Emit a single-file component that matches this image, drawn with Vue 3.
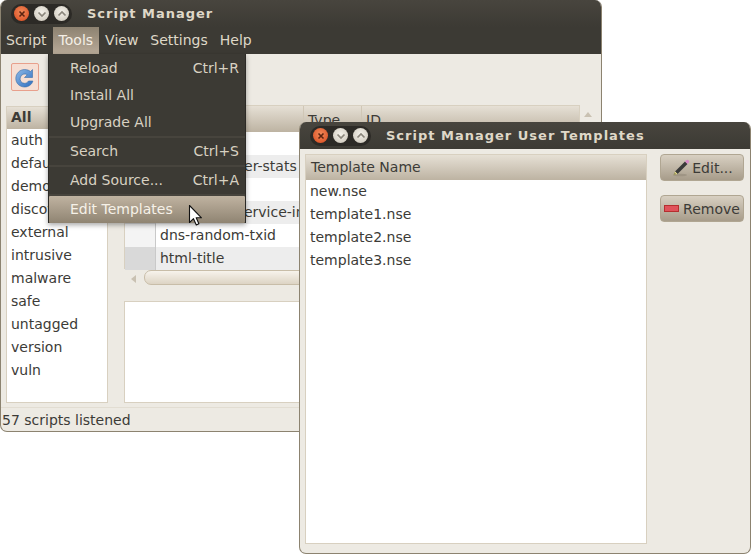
<template>
  <div class="desk">
    <div class="win main-win">
      <div class="titlebar">
        <div class="wm-btns">
          <span class="wm close"><svg width="10" height="10" viewBox="0 0 10 10"><path d="M2.5 2.5l5 5M7.5 2.5l-5 5" stroke="#5c2410" stroke-width="1.6" fill="none"/></svg></span>
          <span class="wm"><svg width="10" height="10" viewBox="0 0 10 10"><path d="M1.5 3.5L5 7l3.5-3.5" stroke="#8a857b" stroke-width="1.7" fill="none"/></svg></span>
          <span class="wm"><svg width="10" height="10" viewBox="0 0 10 10"><path d="M1.5 6.5L5 3l3.5 3.5" stroke="#8a857b" stroke-width="1.7" fill="none"/></svg></span>
        </div>
        <span class="title">Script Manager</span>
      </div>
      <div class="menubar">
        <span v-for="m in menus" :key="m" class="menu-top" :class="{ open: m === 'Tools' }">{{ m }}</span>
      </div>
      <div class="toolbar">
        <span class="tool-btn">
          <svg width="22" height="22" viewBox="0 0 22 22">
            <defs>
              <linearGradient id="reload" x1="0" y1="0" x2="1" y2="1">
                <stop offset="0" stop-color="#8db8e6"/>
                <stop offset="1" stop-color="#2f6fc0"/>
              </linearGradient>
            </defs>
            <path d="M18.5 3.5v8h-8l2.8-2.8a4.6 4.6 0 0 0-6.8 2.3 4.4 4.4 0 0 0 4 6.3c1.8 0 3.3-.9 4-2.3h4.4c-1 3.600-4.300 6-8.300 6-5 0-8.800-3.800-8.800-8.500S5.600 3.500 10.600 3.500c2.500 0 4.600.9 5.900 2z" fill="url(#reload)" stroke="#3b6ea8" stroke-width=".6"/>
          </svg>
        </span>
      </div>
      <div class="panes">
        <div class="cat-list">
          <div class="cat-head">All</div>
          <div v-for="c in categories" :key="c" class="cat-row">{{ c }}</div>
        </div>
        <div class="right-col">
          <div class="tree">
            <div class="tree-head">
              <span class="th th-name"></span>
              <span class="th th-type">Type</span>
              <span class="th th-id">ID</span>
            </div>
            <div v-for="(s, i) in scripts" :key="i" class="tree-row" :class="{ odd: i % 2 === 1 }">
              <span class="grip"></span>
              <span class="script-name">{{ s }}</span>
            </div>
          </div>
          <div class="hscroll">
            <span class="arrow-left"></span>
            <span class="thumb"></span>
          </div>
          <div class="details"></div>
        </div>
        <div class="vscroll"><span class="arrow-up"></span></div>
      </div>
      <div class="statusbar">57 scripts listened</div>
    </div>

    <div class="menu">
      <template v-for="item in toolItems" :key="item.label">
        <div v-if="item.sep" class="menu-sep"></div>
        <div class="menu-item" :class="{ active: item.active }">
          <span>{{ item.label }}</span>
          <span class="accel">{{ item.accel }}</span>
        </div>
      </template>
    </div>

    <div class="win tpl-win">
      <div class="titlebar">
        <div class="wm-btns">
          <span class="wm close"><svg width="10" height="10" viewBox="0 0 10 10"><path d="M2.5 2.5l5 5M7.5 2.5l-5 5" stroke="#5c2410" stroke-width="1.6" fill="none"/></svg></span>
          <span class="wm"><svg width="10" height="10" viewBox="0 0 10 10"><path d="M1.5 3.5L5 7l3.5-3.500" stroke="#8a857b" stroke-width="1.7" fill="none"/></svg></span>
          <span class="wm"><svg width="10" height="10" viewBox="0 0 10 10"><path d="M1.5 6.5L5 3l3.5 3.500" stroke="#8a857b" stroke-width="1.7" fill="none"/></svg></span>
        </div>
        <span class="title">Script Manager User Templates</span>
      </div>
      <div class="tpl-body">
        <div class="tpl-list">
          <div class="tpl-head">Template Name</div>
          <div v-for="t in templates" :key="t" class="tpl-row">{{ t }}</div>
        </div>
        <div class="tpl-actions">
          <button class="btn">
            <svg width="20" height="20" viewBox="0 0 20 20">
              <ellipse cx="9" cy="17" rx="7" ry="1.300" fill="#8d8474" opacity=".5"/>
              <path d="M4 13.500L14 3.500l2.500 2.500-10 10z" fill="#3a3a3a"/>
              <path d="M14 3.500l1.200-1.200a1.500 1.500 0 0 1 2.200 0l.3.300a1.500 1.500 0 0 1 0 2.200L16.500 6z" fill="#d98ac8"/>
              <path d="M4 13.500l2.500 2.500-4 1.300z" fill="#f2e88a"/>
              <path d="M2.500 17.300l1-3 2 2z" fill="#2b2b2b" opacity=".45"/>
            </svg>
            <span>Edit...</span>
          </button>
          <button class="btn btn-remove">
            <span class="minus"></span>
            <span>Remove</span>
          </button>
        </div>
      </div>
    </div>

    <svg class="cursor" width="16" height="24" viewBox="0 0 16 24">
      <path d="M1.500 1.500v17l4-3.800 2.800 6.300 2.600-1.200-2.700-6h5.300z" fill="#fff" stroke="#111" stroke-width="1.100" stroke-linejoin="round"/>
    </svg>
  </div>
</template>

<script setup>
const menus = ['Script', 'Tools', 'View', 'Settings', 'Help']
const categories = ['auth', 'default', 'demo', 'discovery', 'external', 'intrusive', 'malware', 'safe', 'untagged', 'version', 'vuln']
const scripts = ['citrix-brute', 'dhcp-discover-stats', 'dns-zone', 'dns-cache-service-info', 'dns-random-txid', 'html-title']
const toolItems = [
  { label: 'Reload', accel: 'Ctrl+R' },
  { label: 'Install All' },
  { label: 'Upgrade All' },
  { label: 'Search', accel: 'Ctrl+S', sep: true },
  { label: 'Add Source...', accel: 'Ctrl+A', sep: true },
  { label: 'Edit Templates', sep: true, active: true },
]
const templates = ['new.nse', 'template1.nse', 'template2.nse', 'template3.nse']
</script>

<style>
html, body { margin: 0; background: #fff; }
</style>

<style scoped>
.desk {
  position: relative;
  width: 751px;
  height: 554px;
  overflow: hidden;
  background: #fff;
  font-family: "DejaVu Sans", sans-serif;
  font-size: 14px;
  color: #3c3b37;
}
.win {
  position: absolute;
  display: flex;
  flex-direction: column;
  box-sizing: border-box;
  background: #edeae3;
  border: 1px solid #8c8370;
  border-top: none;
  border-radius: 7px;
  overflow: hidden;
}
.main-win { left: 0; top: 0; width: 602px; height: 432px; }
.tpl-win { left: 299px; top: 122px; width: 452px; height: 432px; }

.titlebar {
  height: 27px;
  flex-shrink: 0;
  margin: 0 -1px;
  display: flex;
  align-items: center;
  background: linear-gradient(#48453e, #3c3a34);
  color: #dfd8c8;
}
.main-win .titlebar { padding-left: 11px; }
.tpl-win .titlebar { padding-left: 11px; }
.wm-btns {
  display: flex;
  gap: 5px;
  align-items: center;
  height: 20px;
  padding: 0 3px;
  border-radius: 10px;
  background: #2c2a26;
}
.wm {
  width: 15px;
  height: 15px;
  border-radius: 50%;
  background: radial-gradient(circle at 50% 40%, #f4f1ea, #c9c3b6);
  display: flex;
  align-items: center;
  justify-content: center;
}
.wm.close { background: radial-gradient(circle at 50% 40%, #f08a5a, #d9491d); }
.title {
  margin-left: 15px;
  font-size: 13px;
  font-weight: bold;
  letter-spacing: 1px;
  color: #dfd8c8;
}

.menubar {
  height: 27px;
  flex-shrink: 0;
  margin: 0 -1px;
  display: flex;
  background: #3c3a34;
  color: #dfd8c8;
}
.menu-top {
  padding: 0 6px;
  line-height: 26px;
  height: 27px;
}
.menu-top.open {
  background: linear-gradient(#8d8271, #b8aa98);
  color: #f4efe6;
}

.toolbar {
  height: 51px;
  flex-shrink: 0;
  padding: 9px 0 0 10px;
  box-sizing: border-box;
}
.tool-btn {
  display: flex;
  width: 28px;
  height: 28px;
  box-sizing: border-box;
  align-items: center;
  justify-content: center;
  border: 1px solid #e8a08c;
  background: #f6dfd4;
  border-radius: 2px;
}

.panes {
  flex: 1;
  display: flex;
  padding: 0 5px 0 5px;
  min-height: 0;
  margin-top: 1px;
}
.cat-list {
  width: 102px;
  height: 297px;
  box-sizing: border-box;
  background: #fff;
  border: 1px solid #d8d0c0;
}
.cat-head {
  height: 22px;
  line-height: 21px;
  padding-left: 4px;
  font-weight: bold;
  background: linear-gradient(#e6e0d5, #bdb3a2);
}
.cat-row, .tpl-row {
  height: 23px;
  line-height: 23px;
  padding-left: 4px;
}
.right-col {
  margin-left: 16px;
  flex: 1;
  display: flex;
  flex-direction: column;
}
.tree {
  height: 164px;
  box-sizing: border-box;
  background: #fff;
  border: 1px solid #d8d0c0;
  margin-top: -1px;
}
.tree-head {
  height: 26px;
  display: flex;
  background: linear-gradient(#e6e0d5, #bdb3a2);
}
.th { line-height: 28px; padding-left: 4px; box-sizing: border-box; }
.th-name { width: 178px; }
.th-type { width: 58px; border-left: 1px solid #d0c7b6; }
.th-id { flex: 1; border-left: 1px solid #d0c7b6; }
.tree-row {
  height: 23px;
  line-height: 23px;
  display: flex;
}
.tree-row.odd { background: #ededed; }
.grip {
  width: 30px;
  flex-shrink: 0;
  border-right: 1px solid #c9c9c9;
  background: #f4f4f4;
}
.tree-row.odd .grip { background: #d9d9d9; }
.script-name { padding-left: 4px; white-space: nowrap; }
.hscroll {
  height: 32px;
  display: flex;
  align-items: flex-start;
  padding-top: 1px;
  box-sizing: border-box;
}
.arrow-left {
  margin: 5px 8px 0 7px;
  width: 0;
  height: 0;
  border: 4px solid transparent;
  border-left: none;
  border-right: 5px solid #c9c1b2;
}
.thumb {
  flex: 1;
  height: 15px;
  box-sizing: border-box;
  border: 1px solid #c8bda8;
  border-radius: 7px;
  background: linear-gradient(#f7f3ec, #ddd4c4);
}
.details {
  height: 102px;
  background: #fff;
  border: 1px solid #d8d0c0;
  box-sizing: border-box;
}
.vscroll {
  width: 16px;
  flex-shrink: 0;
  display: flex;
  justify-content: center;
  padding-top: 6px;
}
.arrow-up {
  width: 0;
  height: 0;
  border: 4px solid transparent;
  border-top: none;
  border-bottom: 5px solid #c9c1b2;
}
.statusbar {
  height: 24px;
  line-height: 24px;
  padding-left: 1px;
  flex-shrink: 0;
  border-top: 1px solid #e2ddd2;
  box-sizing: border-box;
}

.menu {
  position: absolute;
  left: 48px;
  top: 54px;
  width: 198px;
  height: 169px;
  box-sizing: border-box;
  background: #3c3a34;
  border: 1px solid #2c2a26;
  border-top: none;
  color: #d8d1c2;
  box-shadow: 0 2px 5px rgba(0, 0, 0, 0.35);
  padding-top: 1px;
}
.menu-item {
  height: 27px;
  line-height: 26px;
  display: flex;
  justify-content: space-between;
  padding: 0 6px 0 21px;
}
.menu-item.active {
  margin-top: 0;
  background: linear-gradient(#c0b3a1, #8f8472);
  color: #f6f1e8;
  border-radius: 1px;
}
.menu-sep {
  height: 2px;
  margin: 0 0 0 0;
  background: #47443d;
}

.tpl-body {
  flex: 1;
  display: flex;
  min-height: 0;
  padding: 5px 6px 9px 5px;
}
.tpl-list {
  width: 342px;
  box-sizing: border-box;
  background: #fff;
  border: 1px solid #d8d0c0;
}
.tpl-head {
  height: 25px;
  line-height: 25px;
  padding-left: 5px;
  background: linear-gradient(#e6e0d5, #bdb3a2);
  margin-bottom: 0;
}
.tpl-row { padding-left: 4px; }
.tpl-actions {
  margin-left: 13px;
  flex: 1;
  display: flex;
  flex-direction: column;
  gap: 14px;
}
.btn {
  height: 27px;
  display: flex;
  align-items: center;
  justify-content: center;
  gap: 1px;
  padding: 0;
  font: inherit;
  color: #3c3b37;
  background: linear-gradient(#d8d0c2, #a79c8a);
  border: 1px solid #b0a692;
  border-radius: 4px;
}
.minus {
  width: 15px;
  height: 7px;
  box-sizing: border-box;
  background: #e0525a;
  border: 1px solid #b52f2f;
  margin-right: 3px;
}
.cursor {
  position: absolute;
  left: 188px;
  top: 204px;
}
</style>
